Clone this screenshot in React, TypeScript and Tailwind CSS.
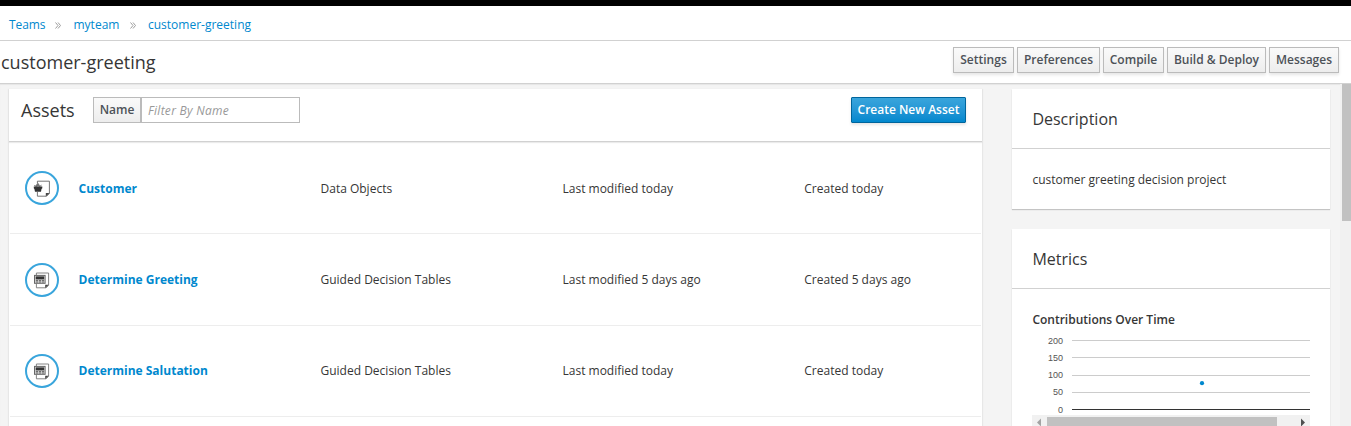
import React from "react";

const actions = [
  { label: "Settings", width: "w-[61px]" },
  { label: "Preferences", width: "w-[83px]" },
  { label: "Compile", width: "w-[61px]" },
  { label: "Build & Deploy", width: "w-[99px]" },
  { label: "Messages", width: "w-[70px]" },
];

type Asset = {
  name: string;
  type: string;
  modified: string;
  created: string;
  kind: "data" | "table";
  height: string;
};

const assets: Asset[] = [
  { name: "Customer", type: "Data Objects", modified: "Last modified today", created: "Created today", kind: "data", height: "h-[92px] *:not-first:pt-[2px]" },
  { name: "Determine Greeting", type: "Guided Decision Tables", modified: "Last modified 5 days ago", created: "Created 5 days ago", kind: "table", height: "h-[92px]" },
  { name: "Determine Salutation", type: "Guided Decision Tables", modified: "Last modified today", created: "Created today", kind: "table", height: "h-[91px]" },
];

function AssetIcon({ kind }: { kind: Asset["kind"] }) {
  return (
    <svg className="block h-[34px] w-[34px] shrink-0" viewBox="0 0 34 34" fill="none">
      <circle cx="17" cy="17" r="16" fill="#fff" stroke="#39a5dc" strokeWidth="2" />
      {kind === "data" ? (
        <>
          <path d="M12.4 12V10.2H24.4V22.4L21.6 25.2H12.4V21" stroke="#666" strokeWidth="0.9" />
          <path d="M20.8 25.5V22H24.6Z" fill="#444" />
          <path d="M8.8 15.6H17.3V17.3L16.5 18L16 20.8H10L9.4 18L8.8 17.3Z" fill="#333" />
          <path d="M11.2 16L10.8 14.2L12.8 11.4L14.8 14.2L14.4 16Z" fill="#777" />
          <path d="M9.3 14.5L12 16M16.5 14.2L14 16" stroke="#555" strokeWidth="0.9" />
        </>
      ) : (
        <>
          <path d="M11.4 12V10H23.6V22.4L21 24.8H11.4V20.5" stroke="#777" strokeWidth="0.9" />
          <path d="M20.2 25.1V21.8H23.8Z" fill="#444" />
          <rect x="9.5" y="12.4" width="10.6" height="7.9" fill="#ddd" stroke="#666" />
          <rect x="10.7" y="13.4" width="8.4" height="3" fill="#333" />
          <path d="M10.8 17.6H19M10.8 19H19" stroke="#555" strokeWidth="0.9" strokeDasharray="2.2 0.8" />
        </>
      )}
    </svg>
  );
}

function Separator() {
  return (
    <svg className="mt-px h-[7px] w-[6px]" viewBox="0 0 6 7" fill="none" stroke="#9c9c9c">
      <path d="M0.5 0.5L3 3.5L0.5 6.5M3 0.5L5.5 3.5L3 6.5" />
    </svg>
  );
}

function Chart() {
  const ticks = [
    { value: 200, y: 9.5, dy: 3.5 },
    { value: 150, y: 26.5, dy: 3.5 },
    { value: 100, y: 44.5, dy: 2.6 },
    { value: 50, y: 61.5, dy: 2.6 },
    { value: 0, y: 78.5, dy: 3.5 },
  ];
  return (
    <svg className="block h-[84px] w-[278px]" viewBox="0 0 278 84">
      {ticks.map((t) => (
        <g key={t.value}>
          <text x="31" y={t.y + t.dy} textAnchor="end" fontSize="9" fill="#545454" fontFamily="Liberation Sans, sans-serif">
            {t.value}
          </text>
          <path d={`M40 ${t.y}H278`} stroke={t.value === 0 ? "#333" : "#ccc"} />
        </g>
      ))}
      <circle cx="170" cy="52.2" r="2.1" fill="#0088ce" />
    </svg>
  );
}

export default function App() {
  return (
    <div className="flex h-[426px] w-[1351px] flex-col overflow-hidden bg-[#f4f4f4] font-['Open_Sans',sans-serif] text-[12px] leading-[20px] text-[#363636]">
      <div className="h-[6px] shrink-0 bg-black" />
      <nav className="flex h-[35px] shrink-0 items-center border-b border-[#d1d1d1] bg-white pb-px pl-[9px] pt-1 text-[#0088ce]">
        <a className="w-[46px] tracking-[-0.1px]">Teams</a>
        <Separator />
        <a className="ml-[12.5px] w-[56px]">myteam</a>
        <Separator />
        <a className="ml-[12.5px]">customer-greeting</a>
      </nav>
      <header className="flex h-[43px] shrink-0 justify-between border-b border-[#d1d1d1] bg-white pl-px pr-[12px]">
        <h1 className="pt-[9px] text-[18px] leading-[24px]">customer-greeting</h1>
        <div className="flex gap-[3px] pt-[6px]">
          {actions.map((a) => (
            <button
              key={a.label}
              className={`${a.width} h-[26px] whitespace-nowrap border border-[#bbb] bg-linear-to-b from-[#fafafa] to-[#ededed] pb-px text-center font-semibold leading-[20px] text-[#4d5258] shadow-[0_2px_3px_rgba(3,3,3,0.1)]`}
            >
              {a.label}
            </button>
          ))}
        </div>
      </header>

      <div className="flex min-h-0 flex-1 shadow-[inset_0_1px_1px_rgba(3,3,3,0.06)]">
        <main className="ml-[9px] mt-[5px] w-[973px] shrink-0 bg-white shadow-[0_1px_1px_1px_rgba(3,3,3,0.05)]">
          <div className="flex h-[53px] items-start border-b border-[#d1d1d1] px-[12px] pr-[16px] shadow-[0_1px_1px_rgba(3,3,3,0.08)]">
            <h2 className="w-[72px] pt-[9px] text-[18px] leading-[24px]">Assets</h2>
            <div className="mt-[8px] flex h-[26px] w-[207px]">
              <span className="w-[48px] border border-[#bbb] bg-linear-to-b from-[#fafafa] to-[#ededed] pt-[2px] text-center font-semibold text-[#4d5258]">Name</span>
              <input
                className="min-w-0 flex-1 border border-[#bbb] bg-white px-[6px] pt-[2px] italic leading-[20px] tracking-[0.28px] outline-none placeholder:text-[#999]"
                placeholder="Filter By Name"
              />
            </div>
            <button className="ml-auto mt-[8px] h-[26px] w-[115px] whitespace-nowrap rounded-[1px] border border-[#00659c] bg-linear-to-b from-[#39a5dc] to-[#0088ce] pb-px text-center font-semibold leading-[20px] text-white shadow-[0_2px_3px_rgba(3,3,3,0.1)]">
              Create New Asset
            </button>
          </div>
          <div className="px-px">
            {assets.map((a) => (
              <div key={a.name} className={`${a.height} flex items-center border-b border-[#ededed] pl-[15px]`}>
                <AssetIcon kind={a.kind} />
                <a className="ml-[19.5px] w-[242px] font-bold text-[#0088ce]">{a.name}</a>
                <span className="w-[242px]">{a.type}</span>
                <span className="w-[241.8px]">{a.modified}</span>
                <span>{a.created}</span>
              </div>
            ))}
          </div>
        </main>

        <aside className="ml-[30px] mt-[5px] flex w-[318px] shrink-0 flex-col gap-[20px]">
          <section className="h-[120px] shrink-0 bg-white shadow-[0_1px_1px_rgba(3,3,3,0.2)]">
            <h2 className="h-[60px] border-b border-[#d1d1d1] pl-[20.4px] pt-[20px] text-[16px] leading-[20px]">Description</h2>
            <p className="pl-[20.4px] pt-[21px]">customer greeting decision project</p>
          </section>
          <section className="h-[220px] shrink-0 bg-white shadow-[0_1px_1px_rgba(3,3,3,0.2)]">
            <h2 className="h-[60px] border-b border-[#d1d1d1] pl-[20.4px] pt-[20px] text-[16px] leading-[20px]">Metrics</h2>
            <div className="pl-[20px]">
              <h3 className="h-[42px] pl-[0.4px] pt-[21px] font-semibold">Contributions Over Time</h3>
              <Chart />
              <div className="flex h-[15px] w-[278px] items-center bg-[#f1f1f1]">
                <svg className="h-[15px] w-[15px]" viewBox="0 0 15 15"><path d="M9 3.5V11.5L5 7.5Z" fill="#a3a3a3" /></svg>
                <div className="h-[11px] w-[230px] bg-[#c1c1c1]" />
                <svg className="ml-[18px] h-[15px] w-[15px]" viewBox="0 0 15 15"><path d="M6 3.5V11.5L10 7.5Z" fill="#505050" /></svg>
              </div>
            </div>
          </section>
        </aside>

        <div className="ml-auto w-[11px] bg-[#f1f1f1] pl-[2px]">
          <div className="h-[137px] bg-[#c1c1c1]" />
        </div>
      </div>
    </div>
  );
}
